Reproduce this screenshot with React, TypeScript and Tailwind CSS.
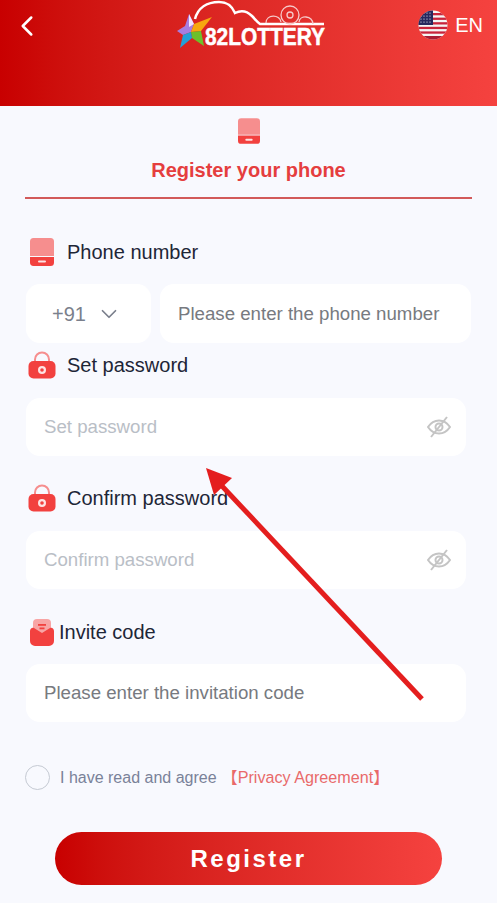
import { ChevronDown, ChevronLeft } from 'lucide-react';

function PhoneIcon({ className }: { className: string }) {
  return (
    <svg viewBox="0 0 24 28" className={className}>
      <path d="M3.5 0h17A3.5 3.5 0 0 1 24 3.5V18H0V3.5A3.5 3.5 0 0 1 3.5 0z" fill="#f68e8e" />
      <path d="M0 19h24v5.5a3.5 3.5 0 0 1-3.500 3.500h-17A3.500 3.500 0 0 1 0 24.500z" fill="#f2413f" />
      <rect x="8" y="22.500" width="8" height="2" rx="1" fill="#fde3e3" />
    </svg>
  );
}

function LockIcon() {
  return (
    <svg viewBox="0 0 28 28" className="w-[28px] h-[28px] shrink-0">
      <path d="M7 12V8.500a7 7 0 0 1 14 0V12" fill="none" stroke="#f68e8e" strokeWidth="2" />
      <rect x="0.500" y="10" width="27" height="17.500" rx="5" fill="#f2413f" />
      <circle cx="14" cy="19" r="4" fill="#fde3e3" />
      <circle cx="14" cy="19" r="1.800" fill="#f2413f" />
    </svg>
  );
}

function InviteIcon() {
  return (
    <svg viewBox="0 0 24 27" className="w-[24px] h-[27px] shrink-0">
      <rect x="3" y="0" width="18" height="20" rx="4" fill="#f8a5a5" />
      <rect x="8" y="5" width="8" height="1.800" fill="#f2413f" />
      <rect x="9.500" y="8.500" width="5" height="1.800" fill="#f2413f" />
      <path d="M0 12c0-2 2-4 4-3l8 5 8-5c2-1 4 1 4 3v10a5 5 0 0 1-5 5H5a5 5 0 0 1-5-5z" fill="#f2413f" />
    </svg>
  );
}

function EyeOff() {
  return (
    <svg viewBox="0 0 24 24" className="w-[24px] h-[24px] shrink-0" fill="none" stroke="#c4c4c4" strokeWidth="2">
      <path d="M1 12c3-4.500 7-6.500 11-6.500S20 7.500 23 12c-3 4.500-7 6.500-11 6.500S4 16.500 1 12z" />
      <circle cx="12" cy="12" r="3.500" />
      <path d="M20 2 4 22" />
    </svg>
  );
}

function FlagIcon() {
  return (
    <svg viewBox="0 0 30 30" className="w-[30px] h-[30px] shrink-0">
      <defs>
        <clipPath id="flagClip">
          <circle cx="15" cy="15" r="14.500" />
        </clipPath>
      </defs>
      <g clipPath="url(#flagClip)">
        <rect width="30" height="30" fill="#f5f5f5" />
        <rect y="3" width="30" height="2.300" fill="#c8243c" />
        <rect y="7.600" width="30" height="2.300" fill="#c8243c" />
        <rect y="12.200" width="30" height="2.300" fill="#c8243c" />
        <rect y="16.800" width="30" height="2.300" fill="#c8243c" />
        <rect y="21.400" width="30" height="2.300" fill="#c8243c" />
        <rect y="26" width="30" height="4" fill="#a81c34" />
        <rect width="15" height="15" fill="#27285e" />
        {[3, 6, 9, 12].map((y) =>
          [3, 6, 9, 12].map((x) => <circle key={`${x}-${y}`} cx={x} cy={y} r="0.600" fill="#fff" />),
        )}
      </g>
    </svg>
  );
}

function Logo() {
  return (
    <div className="relative w-[150px] h-[50px] shrink-0">
      <svg viewBox="0 0 150 50" className="absolute inset-0 w-[150px] h-[50px]">
        <path d="M20 19C23 8 32 2 44 2c9 0 13 4 16 11 6-3 12-2 17 3 3 3 5 6 8 8h64" fill="none" stroke="#fff" strokeWidth="2.500" />
        <g fill="none" stroke="#f6c9c9" strokeWidth="1.300">
          <path d="M91 23c0-9 14-9 15-1" />
          <circle cx="115" cy="15" r="9" />
          <circle cx="115" cy="15" r="3" />
          <path d="M124 22c1-7 13-7 14 2" />
        </g>
        <path d="M14 14 19 24 16 32 8 35 2 31 10 26z" fill="#a77de0" />
        <path d="M14 14 19 24 14 27z" fill="#f3e6ff" />
        <path d="M19 24 37 17 26 31 16 32z" fill="#f7a70f" />
        <path d="M26 31 29 46 17 38 16 32z" fill="#6cc02a" />
        <path d="M17 38 5 48 8 35 16 32z" fill="#23a0d8" />
      </svg>
      <span className="absolute left-[30px] top-[25px] text-[24px] leading-[24px] font-bold text-white origin-left scale-x-[0.87] whitespace-nowrap [-webkit-text-stroke:0.5px_white]">
        82LOTTERY
      </span>
    </div>
  );
}

function FieldLabel({ icon, text, gap }: { icon: React.ReactNode; text: string; gap: string }) {
  return (
    <div className={`flex items-center ${gap}`}>
      {icon}
      <span className="text-[20px] leading-[28px] text-[#1e2637]">{text}</span>
    </div>
  );
}

function PasswordBox({ placeholder }: { placeholder: string }) {
  return (
    <div className="mt-[19px] w-[440px] h-[58px] ml-px bg-white rounded-[14px] flex items-center justify-between pl-[18px] pr-[15px]">
      <span className="text-[18.67px] text-[#b9bec6]">{placeholder}</span>
      <EyeOff />
    </div>
  );
}

export default function App() {
  return (
    <div className="relative w-[497px] h-[903px] overflow-hidden bg-[#f8f9fe] font-['Liberation_Sans',Arial,sans-serif]">
      <header className="h-[106px] bg-gradient-to-r from-[#c80000] to-[#f5423f] flex items-start pl-[10px] pr-[14px]">
        <ChevronLeft size={34} strokeWidth={1.8} className="text-white mt-[9px]" />
        <div className="ml-[131px]">
          <Logo />
        </div>
        <div className="ml-auto flex items-center gap-[7px] mt-[10px] text-white text-[20px] leading-[30px]">
          <FlagIcon />
          EN
        </div>
      </header>

      <main className="px-[25px]">
        <div className="flex flex-col items-center border-b-2 border-[#d25a5a] pt-[11px] h-[93px]">
          <PhoneIcon className="w-[22px] h-[28px]" />
          <h2 className="mt-[11px] text-[20px] leading-[28px] font-bold text-[#e53e3e]">Register your phone</h2>
        </div>

        <div className="mt-[39px] pl-[5px]">
          <FieldLabel icon={<PhoneIcon className="w-[24px] h-[28px] shrink-0" />} text="Phone number" gap="gap-[13px]" />
        </div>
        <div className="mt-[18px] ml-px flex gap-[9px]">
          <div className="w-[125px] h-[59px] bg-white rounded-[14px] flex items-center gap-[10px] pl-[26px] text-[20px] text-[#7a7f8c]">
            +91
            <ChevronDown size={26} strokeWidth={1.6} />
          </div>
          <div className="w-[311px] h-[59px] bg-white rounded-[14px] flex items-center pl-[18px] text-[18.67px] text-[#777a80]">
            Please enter the phone number
          </div>
        </div>

        <div className="mt-[8px] pl-[3px]">
          <FieldLabel icon={<LockIcon />} text="Set password" gap="gap-[11px]" />
        </div>
        <PasswordBox placeholder="Set password" />

        <div className="mt-[28px] pl-[3px]">
          <FieldLabel icon={<LockIcon />} text="Confirm password" gap="gap-[11px]" />
        </div>
        <PasswordBox placeholder="Confirm password" />

        <div className="mt-[29px] pl-[5px]">
          <FieldLabel icon={<InviteIcon />} text="Invite code" gap="gap-[5px]" />
        </div>
        <div className="mt-[18px] ml-px w-[440px] h-[58px] bg-white rounded-[14px] flex items-center pl-[18px] text-[18.67px] text-[#777a80]">
          Please enter the invitation code
        </div>

        <div className="mt-[43px] flex items-center">
          <div className="w-[25px] h-[25px] rounded-full border border-[#c5cad3] shrink-0" />
          <span className="ml-[10px] text-[16px] text-[#7a8299]">I have read and agree</span>
          <span className="ml-[5px] text-[16.15px] text-[#e96a6a] font-['Liberation_Sans','Noto_Sans_CJK_SC',sans-serif]">【Privacy Agreement】</span>
        </div>

        <button className="mt-[42px] ml-[30px] w-[387px] h-[53px] rounded-full bg-gradient-to-r from-[#c80000] to-[#f5423f] text-white text-[24px] font-bold tracking-[2.500px]">
          Register
        </button>
      </main>

      <svg viewBox="0 0 497 903" className="absolute inset-0 w-[497px] h-[903px] pointer-events-none">
        <path d="M422 699 222 486" stroke="#e41e1e" strokeWidth="5" fill="none" />
        <path d="M206 468 232 478 214 495z" fill="#e41e1e" />
      </svg>
    </div>
  );
}
